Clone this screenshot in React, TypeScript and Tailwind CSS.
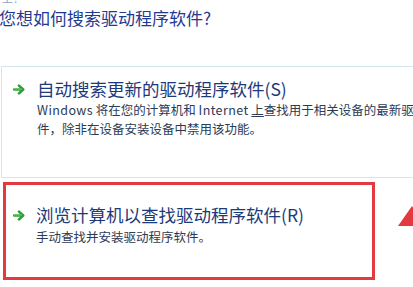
function GreenArrow() {
  return (
    <svg width="12" height="11" viewBox="0 0 12 11" className="shrink-0">
      <path d="M1.2 5.5h8.2" stroke="#2f9e36" strokeWidth="2.6" strokeLinecap="round" fill="none" />
      <path d="M6 1.6l4.2 3.9L6 9.4" stroke="#2f9e36" strokeWidth="2.6" strokeLinecap="round" strokeLinejoin="round" fill="none" />
      <path d="M1.4 5h7.4" stroke="#7fd67f" strokeWidth="0.8" strokeLinecap="round" fill="none" />
    </svg>
  );
}

export default function App() {
  const font = { fontFamily: '"Noto Sans CJK SC", "Noto Sans", sans-serif' };

  return (
    <div className="relative h-[287px] w-[413px] overflow-hidden bg-white" style={font}>
      <div className="-mt-[8px] h-[12px] pl-[2px] text-[11px] leading-[12px] text-[#8ea3cc]">上？</div>
      <div className="-ml-[1px] mt-[2px] whitespace-nowrap text-[17px] leading-[24px] text-[#1f3a92]">
        您想如何搜索驱动程序软件?
      </div>

      <div className="ml-[1px] mt-[36px] h-[112px] w-[440px] overflow-hidden border border-[#d3e7ee] bg-white">
        <div className="flex pt-[10px]">
          <div className="w-[35px] shrink-0 pl-[11px] pt-[7px]">
            <GreenArrow />
          </div>
          <div className="shrink-0 whitespace-nowrap">
            <div className="text-[17.5px] leading-[24px] text-[#1c3a7a]">自动搜索更新的驱动程序软件(S)</div>
            <div className="-mt-[1px] text-[12.5px] leading-[19px] text-[#2d3b55]">
              <span className="tracking-[0.4px]">Windows</span> 将在您的计算机和 <span className="tracking-[0.4px]">Internet</span>{' '}
              <span className="underline">上</span>查找用于相关设备的最新驱动程序软
              <br />
              件，除非在设备安装设备中禁用该功能。
            </div>
          </div>
        </div>
      </div>

      <div className="ml-[3px] mt-[4px] h-[98px] w-[372px] border-[3px] border-[#e23a40]">
        <div className="flex pt-[18px]">
          <div className="w-[30px] shrink-0 pl-[7px] pt-[7px]">
            <GreenArrow />
          </div>
          <div className="whitespace-nowrap">
            <div className="text-[17.5px] leading-[24px] text-[#1c3a7a]">浏览计算机以查找驱动程序软件(R)</div>
            <div className="text-[12.5px] leading-[19px] text-[#2d3b55]">手动查找并安装驱动程序软件。</div>
          </div>
        </div>
      </div>

      <svg className="absolute left-[394px] top-[204px]" width="30" height="24" viewBox="0 0 30 24">
        <polygon points="18,2 4,22 32,22" fill="#e23a40" />
      </svg>
    </div>
  );
}
